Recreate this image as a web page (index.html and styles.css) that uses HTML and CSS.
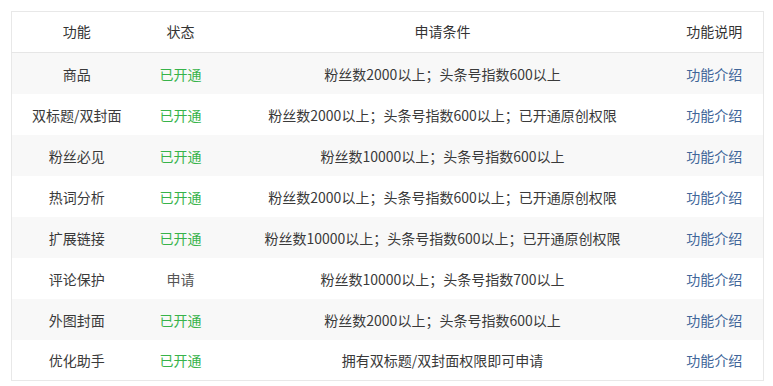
FILE: index.html
```html
<!DOCTYPE html>
<html lang="zh">
<head>
<meta charset="utf-8">
<link rel="stylesheet" href="styles.css">
</head>
<body>
<div class="wrap">
<table class="tbl">
  <colgroup>
    <col class="c1"><col class="c2"><col class="c3"><col class="c4">
  </colgroup>
  <thead>
    <tr><th>功能</th><th>状态</th><th>申请条件</th><th>功能说明</th></tr>
  </thead>
  <tbody>
    <tr><td>商品</td><td class="on">已开通</td><td>粉丝数2000以上；头条号指数600以上</td><td class="link">功能介绍</td></tr>
    <tr><td>双标题/双封面</td><td class="on">已开通</td><td>粉丝数2000以上；头条号指数600以上；已开通原创权限</td><td class="link">功能介绍</td></tr>
    <tr><td>粉丝必见</td><td class="on">已开通</td><td>粉丝数10000以上；头条号指数600以上</td><td class="link">功能介绍</td></tr>
    <tr><td>热词分析</td><td class="on">已开通</td><td>粉丝数2000以上；头条号指数600以上；已开通原创权限</td><td class="link">功能介绍</td></tr>
    <tr><td>扩展链接</td><td class="on">已开通</td><td>粉丝数10000以上；头条号指数600以上；已开通原创权限</td><td class="link">功能介绍</td></tr>
    <tr><td>评论保护</td><td class="apply">申请</td><td>粉丝数10000以上；头条号指数700以上</td><td class="link">功能介绍</td></tr>
    <tr><td>外图封面</td><td class="on">已开通</td><td>粉丝数2000以上；头条号指数600以上</td><td class="link">功能介绍</td></tr>
    <tr><td>优化助手</td><td class="on">已开通</td><td>拥有双标题/双封面权限即可申请</td><td class="link">功能介绍</td></tr>
  </tbody>
</table>
</div>
</body>
</html>
```
FILE: styles.css
```css
html, body { margin: 0; padding: 0; background: #fff; }
body {
  font-family: "Noto Sans CJK SC", "Noto Sans", sans-serif;
  font-size: 14px;
  color: #3a3a3a;
}
.wrap { padding: 11px 11px 0 11px; }
.tbl {
  width: 752px;
  border-collapse: collapse;
  table-layout: fixed;
  border: 1px solid #e8e8e8;
}
.c1 { width: 130px; }
.c2 { width: 78px; }
.c3 { width: 446px; }
.c4 { width: 98px; }
.tbl th, .tbl td {
  height: 41px;
  padding: 0;
  text-align: center;
  vertical-align: middle;
  white-space: nowrap;
  box-sizing: border-box;
}
.tbl th {
  font-weight: normal;
  color: #333;
  border-bottom: 1px solid #e6e6e6;
  height: 41px;
  padding-bottom: 2px;
}
.tbl tbody td { padding-top: 1px; }
.tbl tbody tr:nth-child(odd) { background: #f8f8f8; }
.tbl tbody tr:nth-child(even) { background: #fff; }
.on { color: #37b34a; }
.apply { color: #555; }
.link { color: #406599; }
```
